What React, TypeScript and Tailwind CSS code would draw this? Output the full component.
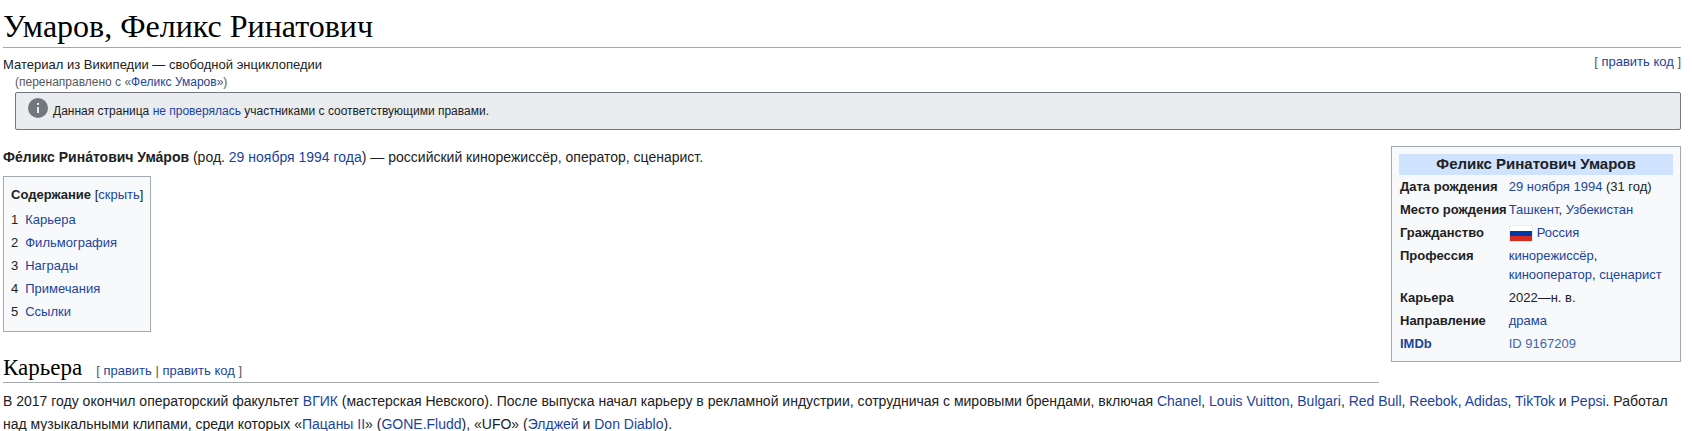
import React, { useState } from 'react';

const Link = ({ children }: { children: React.ReactNode }) => (
  <a href="#" className="text-[#1b449c] hover:underline">{children}</a>
);

const contents = ['Карьера', 'Фильмография', 'Награды', 'Примечания', 'Ссылки'];

const RussianFlag = () => (
  <svg width="24" height="17" viewBox="0 0 22 15" className="mr-1 inline-block border border-[#eaecf0]" aria-hidden="true">
    <rect width="22" height="5" fill="#fff" />
    <rect y="5" width="22" height="5" fill="#0039a6" />
    <rect y="10" width="22" height="5" fill="#d52b1e" />
  </svg>
);

const facts = [
  { label: 'Дата рождения', value: <><Link>29 ноября</Link> <Link>1994</Link> (31 год)</> },
  { label: 'Место рождения', value: <><Link>Ташкент</Link>, <Link>Узбекистан</Link></> },
  { label: 'Гражданство', value: <><RussianFlag /><Link>Россия</Link></> },
  { label: 'Профессия', value: <><Link>кинорежиссёр</Link>, <Link>кинооператор</Link>, <Link>сценарист</Link></> },
  { label: 'Карьера', value: '2022—н. в.' },
  { label: 'Направление', value: <Link>драма</Link> },
  { label: <Link>IMDb</Link>, value: <a href="#" className="text-[#4065b4] hover:underline">ID 9167209</a> },
];

const Infobox = () => (
  <aside className="float-right mb-4 ml-3 w-[290px] border border-[#a2a9b1] bg-[#f8f9fa] px-[7px] pt-[7px] pb-1.5">
    <table className="w-full text-[13px] leading-[19px]">
      <thead>
        <tr>
          <th colSpan={2} className="bg-[#cfe3ff] pb-px text-[15px] leading-5 font-bold">Феликс Ринатович Умаров</th>
        </tr>
      </thead>
      <tbody>
        {facts.map((fact, i) => (
          <tr key={i}>
            <th scope="row" className="w-[108px] px-px py-0.5 text-left align-top text-[13px] font-bold whitespace-nowrap">{fact.label}</th>
            <td className="py-0.5 pr-2 pl-px align-top">{fact.value}</td>
          </tr>
        ))}
      </tbody>
    </table>
  </aside>
);

const Contents = () => {
  const [open, setOpen] = useState(true);

  return (
    <nav className="mt-[7px] w-fit border border-[#a2a9b1] bg-[#f8f9fa] px-[7px] pt-[7px] pb-2 text-[13px]">
      <div className="leading-[22px]">
        <b>Содержание</b>{' '}
        [<button type="button" onClick={() => setOpen(!open)} className="cursor-pointer text-[#1b449c]">{open ? 'скрыть' : 'показать'}</button>]
      </div>
      {open && (
        <ol className="mt-0.5">
          {contents.map((item, i) => (
            <li key={item} className="flex gap-[7px] leading-[23px]">
              <span>{i + 1}</span>
              <Link>{item}</Link>
            </li>
          ))}
        </ol>
      )}
    </nav>
  );
};

const App = () => {
  return (
    <div className="bg-white pr-3 pl-[3px] font-['Liberation_Sans',Arial,sans-serif] text-[14px] leading-[23px] text-[#202122]">
      <h1 className="border-b border-[#a2a9b1] pt-2 pb-[3px] font-['Liberation_Serif',serif] text-[32px] leading-9 text-black">
        Умаров, Феликс Ринатович
      </h1>

      <div className="flex justify-between">
        <div className="pt-2 pb-px">
          <div className="text-[13px] leading-[18px]">Материал из Википедии — свободной энциклопедии</div>
          <div className="ml-3 text-[12px] leading-[17px] text-[#54595d]">
            (перенаправлено с «<Link>Феликс Умаров</Link>»)
          </div>
        </div>
        <div className="pt-0.5 text-[13px] text-[#54595d]">[ <Link>править код</Link> ]</div>
      </div>

      <div className="ml-3 flex items-center gap-[5px] rounded-xs border border-[#72777d] bg-[#eaecf0] px-3 py-[5px] text-[12px] leading-[18px]">
        <svg width="20" height="20" viewBox="0 0 20 20" className="mb-[6px]" aria-hidden="true">
          <circle cx="10" cy="10" r="10" fill="#72777d" />
          <path d="M9 5h2v2H9zM9 9h2v6H9z" fill="#eaecf0" />
        </svg>
        <p>Данная страница <Link>не проверялась</Link> участниками с соответствующими правами.</p>
      </div>

      <main className="pt-4">
        <Infobox />
        <p>
          <b>Фе́ликс Рина́тович Ума́ров</b> (род. <Link>29 ноября</Link> <Link>1994 года</Link>) — российский кинорежиссёр, оператор, сценарист.
        </p>
        <Contents />

        <div className="mt-[23px] flex items-baseline gap-3.5 overflow-hidden border-b border-[#a2a9b1]">
          <h2 className="font-['Liberation_Serif',serif] text-[23px] leading-[26px] text-black">Карьера</h2>
          <span className="text-[13px] leading-[22px] text-[#54595d]">
            [ <Link>править</Link> | <Link>править код</Link> ]
          </span>
        </div>
        <p className="mt-[7px]">
          В 2017 году окончил операторский факультет <Link>ВГИК</Link> (мастерская Невского). После выпуска начал карьеру в рекламной индустрии, сотрудничая с мировыми брендами, включая <Link>Chanel</Link>, <Link>Louis Vuitton</Link>, <Link>Bulgari</Link>, <Link>Red Bull</Link>, <Link>Reebok</Link>, <Link>Adidas</Link>, <Link>TikTok</Link> и <Link>Pepsi</Link>. Работал над музыкальными клипами, среди которых «<Link>Пацаны II</Link>» (<Link>GONE.Fludd</Link>), «UFO» (<Link>Элджей</Link> и <Link>Don Diablo</Link>).
        </p>
      </main>
    </div>
  );
};

export default App;
